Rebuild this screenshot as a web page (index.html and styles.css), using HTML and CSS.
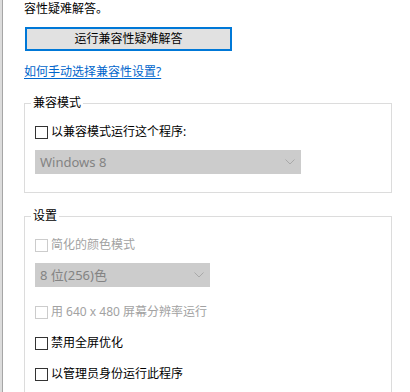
FILE: index.html
```html
<!DOCTYPE html>
<html lang="zh-CN">
<head>
<meta charset="utf-8">
<title>兼容性</title>
<link rel="stylesheet" href="styles.css">
</head>
<body>
<div class="win">
  <div class="intro">容性疑难解答。</div>
  <button class="btn-primary" type="button">运行兼容性疑难解答</button>
  <a class="link" href="#">如何手动选择兼容性设置?</a>

  <fieldset class="group">
    <legend class="legend">兼容模式</legend>
    <div class="group-body group-body-first">
      <label class="check"><span class="box"></span><span class="check-text">以兼容模式运行这个程序:</span></label>
      <div class="select select-wide"><span class="select-text">Windows 8</span><svg class="chev" width="10" height="6" viewBox="0 0 10 6"><path d="M0.5 0.5 L5 5 L9.5 0.5" fill="none" stroke="#a9a9a9" stroke-width="1"/></svg></div>
    </div>
  </fieldset>

  <fieldset class="group group-second">
    <legend class="legend">设置</legend>
    <div class="group-body group-body-second">
      <label class="check disabled"><span class="box"></span><span class="check-text">简化的颜色模式</span></label>
      <div class="select select-narrow"><span class="select-text">8 位(256)色</span><svg class="chev" width="10" height="6" viewBox="0 0 10 6"><path d="M0.5 0.5 L5 5 L9.5 0.5" fill="none" stroke="#a9a9a9" stroke-width="1"/></svg></div>
      <label class="check disabled row-gap-lg"><span class="box"></span><span class="check-text">用 640 x 480 屏幕分辨率运行</span></label>
      <label class="check row-gap"><span class="box"></span><span class="check-text">禁用全屏优化</span></label>
      <label class="check row-gap"><span class="box"></span><span class="check-text">以管理员身份运行此程序</span></label>
      <div class="btn-dpi"></div>
    </div>
  </fieldset>
</div>
</body>
</html>
```
FILE: styles.css
```css
html, body {
  margin: 0;
  padding: 0;
  background: #ffffff;
}

body {
  font-family: "Noto Sans", "Noto Sans CJK SC", sans-serif;
  font-size: 12px;
  color: #000000;
}

.win {
  width: 410px;
  height: 392px;
  box-sizing: border-box;
  overflow: hidden;
  border-left: 2px solid #dcdcdc;
  box-shadow: inset 1px 0 0 #a6a6a6;
  padding: 0 18px 0 22px;
  display: flex;
  flex-direction: column;
  align-items: flex-start;
}

.intro {
  line-height: 17px;
  height: 17px;
  margin-top: 0;
}

.btn-primary {
  margin: 10px 0 0 1px;
  width: 207px;
  height: 26px;
  box-sizing: border-box;
  border: 2px solid #0078d7;
  background: #e1e1e1;
  font-family: "Noto Sans", "Noto Sans CJK SC", sans-serif;
  font-size: 12px;
  color: #000000;
  padding: 0;
  line-height: 20px;
}

.link {
  margin-top: 13px;
  line-height: 16px;
  color: #0066cc;
  text-decoration: underline;
  text-underline-offset: 2px;
}

.group {
  align-self: stretch;
  margin: 15px 0 0 0;
  padding: 0;
  border: 1px solid #dcdcdc;
  min-width: 0;
}

.group-second {
  flex: none;
}

.legend {
  margin-left: 6px;
  padding: 0 2px;
  line-height: 16px;
}

.group-body {
  display: flex;
  flex-direction: column;
  align-items: flex-start;
  padding: 0 10px;
}

.group-body-first {
  padding-top: 13px;
  padding-bottom: 18px;
}

.group-body-second {
  padding-top: 13px;
  padding-bottom: 20px;
}

.check {
  display: flex;
  align-items: center;
  line-height: 16px;
  height: 16px;
}

.box {
  width: 13px;
  height: 13px;
  box-sizing: border-box;
  border: 1px solid #333333;
  background: #ffffff;
  margin-right: 3px;
  flex: none;
}

.check.disabled {
  color: #a2a2a2;
}

.check.disabled .box {
  border-color: #cccccc;
}

.row-gap-lg {
  margin-top: 17px;
}

.row-gap {
  margin-top: 15px;
}

.select {
  height: 24px;
  box-sizing: border-box;
  background: #cccccc;
  border: 1px solid #cccccc;
  display: flex;
  align-items: center;
  justify-content: space-between;
  padding: 0 4px 0 4px;
  color: #838383;
  font-size: 13px;
}

.select-wide {
  width: 266px;
  margin-top: 10px;
}

.select-narrow {
  width: 175px;
  margin-top: 10px;
}

.select-text {
  line-height: 16px;
}

.chev {
  display: block;
  margin-right: 1px;
}

.btn-dpi {
  width: 208px;
  height: 24px;
  box-sizing: border-box;
  margin: 11px 0 0 1px;
  border: 1px solid #adadad;
  background: #e1e1e1;
  flex: none;
}
```
